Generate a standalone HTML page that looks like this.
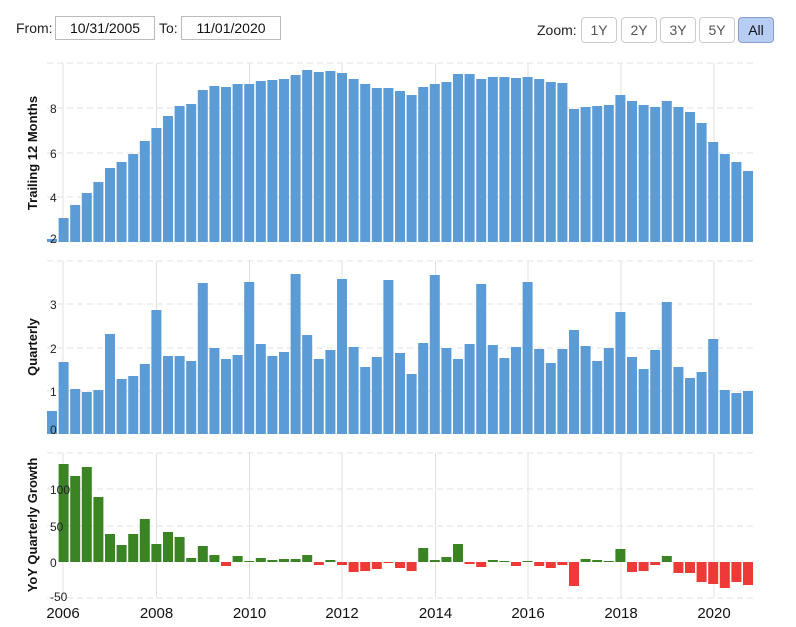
<!DOCTYPE html>
<html><head><meta charset="utf-8"><style>
body{margin:0;background:#fff;width:796px;height:627px;overflow:hidden;font-family:"Liberation Sans",sans-serif}
.lbl{position:absolute;font-size:14px;color:#222}
.box{position:absolute;border:1px solid #bbb;height:22px;line-height:22px;text-align:center;font-size:14px;color:#111;box-sizing:border-box;height:24px}
.btn{position:absolute;top:17px;height:26px;width:36px;border:1px solid #ccc;border-radius:4px;box-sizing:border-box;text-align:center;line-height:24px;font-size:14px;color:#555;background:#fff}
</style></head><body>
<div class="lbl" style="left:16px;top:20px">From:</div>
<div class="box" style="left:55px;top:16px;width:100px">10/31/2005</div>
<div class="lbl" style="left:159px;top:20px">To:</div>
<div class="box" style="left:181px;top:16px;width:100px">11/01/2020</div>
<div class="lbl" style="left:537px;top:22px">Zoom:</div>
<div class="btn" style="left:581px">1Y</div>
<div class="btn" style="left:621px">2Y</div>
<div class="btn" style="left:660px">3Y</div>
<div class="btn" style="left:699px">5Y</div>
<div class="btn" style="left:738px;background:#b8cdf3;border-color:#8a9fcc;color:#111">All</div>
<svg id="c" width="796" height="627" style="position:absolute;left:0;top:0" font-family="Liberation Sans, sans-serif"></svg>
<script>
var s='';
var years=[63,156.5,249.5,342,435.5,528,621,714],yl=['2006','2008','2010','2012','2014','2016','2018','2020'];
function vg(t,b){years.forEach(function(x){s+='<line x1="'+x+'" y1="'+t+'" x2="'+x+'" y2="'+b+'" stroke="#e0e0e0"/>';});}
function hg(y){s+='<line x1="47" y1="'+y+'" x2="753" y2="'+y+'" stroke="#e2e2e2" stroke-dasharray="6,4"/>';}
vg(63,242);[63,108,153,197].forEach(hg);
vg(261,434);[261,304,348,391].forEach(hg);
vg(453,598);[453,489,526,598].forEach(hg);
var p1=[239,218,205,193,182,168,162,154,141,128,116,106,104,90,86,87,84,84,81,80,79,75,70,72,71,73,79,84,88,88,91,95,87,84,82,74,74,79,77,77,78,77,79,82,83,109,107,106,105,95,101,105,107,101,107,112,123,142,154,162,171];
var p2=[411,362,389,392,390,334,379,376,364,310,356,356,361,283,348,359,355,282,344,356,352,274,335,359,350,279,347,367,357,280,353,374,343,275,348,359,344,284,345,358,347,282,349,363,349,330,346,361,348,312,357,369,350,302,367,378,372,339,390,393,391];
var p3=[null,464,476,467,497,534,545,534,519,544,532,537,558,546,555,566,556,561,558,560,559,559,555,565,560,565,572,571,569,563,568,571,548,560,557,544,564,567,560,561,566,561,566,568,565,586,559,560,561,549,572,571,565,556,573,573,582,584,588,582,585];
for(var i=0;i<61;i++){var x=(47+i*11.6).toFixed(1);
s+='<rect x="'+x+'" y="'+p1[i]+'" width="10" height="'+(242-p1[i])+'" fill="#5b9bd6"/>';
s+='<rect x="'+x+'" y="'+p2[i]+'" width="10" height="'+(434-p2[i])+'" fill="#5b9bd6"/>';
var v=p3[i];if(v!==null){if(v<=562)s+='<rect x="'+x+'" y="'+v+'" width="10" height="'+(562-v)+'" fill="#3b8423"/>';else s+='<rect x="'+x+'" y="562" width="10" height="'+(v-562)+'" fill="#ee3a36"/>';}}
function t(x,y,txt,sz){s+='<text x="'+x+'" y="'+y+'" font-size="'+(sz||12)+'" fill="#222">'+txt+'</text>';}
t(50,113,'8');t(50,158,'6');t(50,202,'4');t(50,243,'2');
t(50,309,'3');t(50,353,'2');t(50,396,'1');t(50,434,'0');
t(50,494,'100');t(50,531,'50');t(50,567,'0');t(50,601,'-50');
yl.forEach(function(l,k){s+='<text x="'+years[k]+'" y="618" font-size="15" text-anchor="middle" fill="#111">'+l+'</text>';});
function r(y,txt){s+='<text transform="translate(37,'+y+') rotate(-90)" font-size="13" font-weight="bold" text-anchor="middle" fill="#111">'+txt+'</text>';}
r(153,'Trailing 12 Months');r(347,'Quarterly');r(525,'YoY Quarterly Growth');
document.getElementById('c').innerHTML=s;
</script>
</body></html>
